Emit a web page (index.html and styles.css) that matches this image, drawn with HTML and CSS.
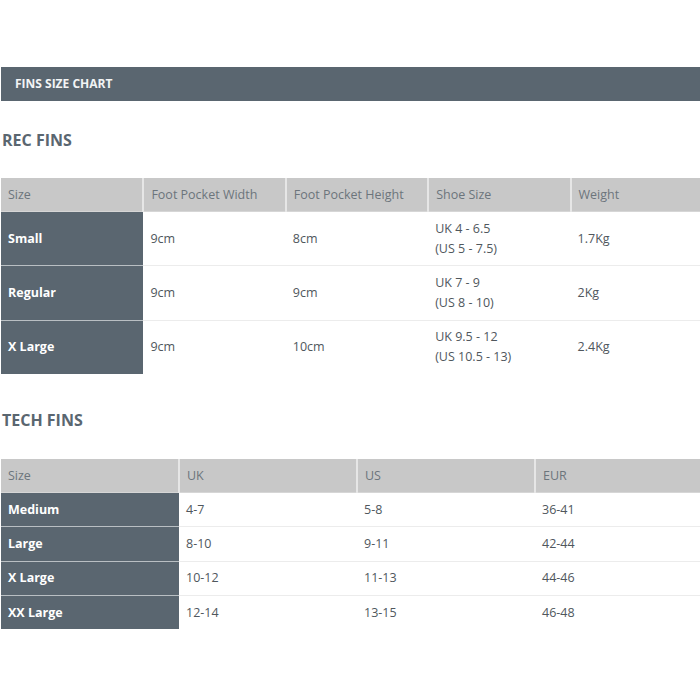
FILE: index.html
```html
<!DOCTYPE html>
<html>
<head>
<meta charset="utf-8">
<link rel="stylesheet" href="styles.css">
</head>
<body>
<div class="page">
  <div class="bar">FINS SIZE CHART</div>
  <h2 class="title t1">REC FINS</h2>
  <table class="chart rec">
    <tr class="head"><td>Size</td><td>Foot Pocket Width</td><td>Foot Pocket Height</td><td>Shoe Size</td><td>Weight</td></tr>
    <tr><th>Small</th><td>9cm</td><td>8cm</td><td>UK 4 - 6.5<br>(US 5 - 7.5)</td><td>1.7Kg</td></tr>
    <tr><th>Regular</th><td>9cm</td><td>9cm</td><td>UK 7 - 9<br>(US 8 - 10)</td><td>2Kg</td></tr>
    <tr><th>X Large</th><td>9cm</td><td>10cm</td><td>UK 9.5 - 12<br>(US 10.5 - 13)</td><td>2.4Kg</td></tr>
  </table>
  <h2 class="title t2">TECH FINS</h2>
  <table class="chart tech">
    <tr class="head"><td>Size</td><td>UK</td><td>US</td><td>EUR</td></tr>
    <tr><th>Medium</th><td>4-7</td><td>5-8</td><td>36-41</td></tr>
    <tr><th>Large</th><td>8-10</td><td>9-11</td><td>42-44</td></tr>
    <tr><th>X Large</th><td>10-12</td><td>11-13</td><td>44-46</td></tr>
    <tr><th>XX Large</th><td>12-14</td><td>13-15</td><td>46-48</td></tr>
  </table>
</div>
</body>
</html>
```

FILE: styles.css
```css
html, body {
  margin: 0;
  padding: 0;
  background: #fff;
  overflow: hidden;
}
.page {
  width: 712px;
  padding: 67px 0 0 1px;
  font-family: "Open Sans", "Liberation Sans", sans-serif;
  color: #50575d;
}
.bar {
  height: 34px;
  line-height: 34px;
  background: #5a6670;
  color: #f2f4f5;
  font-weight: 700;
  font-size: 12px;
  padding-left: 14px;
}
.title {
  margin: 0;
  font-size: 16px;
  font-weight: 700;
  color: #5a6670;
  line-height: 24px;
  padding-left: 1px;
}
.t1 { margin-top: 27px; margin-bottom: 26px; }
.t2 { margin-top: 34px; margin-bottom: 27px; }
.chart {
  width: 712px;
  border-collapse: collapse;
  table-layout: fixed;
  font-size: 12.5px;
}
.chart td, .chart th {
  text-align: left;
  padding: 0 7px;
  vertical-align: middle;
  line-height: 20px;
  border-bottom: 1px solid #ececec;
}
.chart .head td {
  background: #c8c8c8;
  color: #6c757c;
  height: 33px;
  border-left: 2px solid #e6e6e6;
  border-bottom: 1px solid #d6d6d6;
}
.chart .head td:first-child { border-left: none; }
.chart th {
  background: #5a6670;
  color: #fff;
  font-weight: 700;
  border-bottom: 1px solid #b9bfc3;
}
.chart tr:last-child td, .chart tr:last-child th { border-bottom: none; }
.rec tr:not(.head) td, .rec th { height: 53.4px; }
.tech tr:not(.head) td, .tech th { height: 33.3px; }
```
